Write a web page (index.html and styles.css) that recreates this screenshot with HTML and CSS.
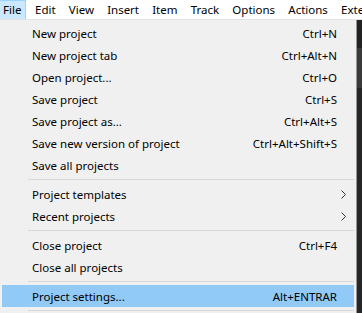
FILE: index.html
```html
<!DOCTYPE html>
<html>
<head>
<meta charset="utf-8">
<link rel="stylesheet" href="styles.css">
</head>
<body>
<div class="screen">
  <div class="menubar">
    <span class="mb-item active">File</span>
    <span class="mb-item">Edit</span>
    <span class="mb-item">View</span>
    <span class="mb-item">Insert</span>
    <span class="mb-item">Item</span>
    <span class="mb-item">Track</span>
    <span class="mb-item">Options</span>
    <span class="mb-item">Actions</span>
    <span class="mb-item">Extensions</span>
  </div>
  <div class="body-row">
    <div class="menu">
      <div class="item"><span class="label">New project</span><span class="key">Ctrl+N</span><span class="arrow"></span></div>
      <div class="item"><span class="label">New project tab</span><span class="key">Ctrl+Alt+N</span><span class="arrow"></span></div>
      <div class="item"><span class="label">Open project...</span><span class="key">Ctrl+O</span><span class="arrow"></span></div>
      <div class="item"><span class="label">Save project</span><span class="key">Ctrl+S</span><span class="arrow"></span></div>
      <div class="item"><span class="label">Save project as...</span><span class="key">Ctrl+Alt+S</span><span class="arrow"></span></div>
      <div class="item"><span class="label">Save new version of project</span><span class="key">Ctrl+Alt+Shift+S</span><span class="arrow"></span></div>
      <div class="item"><span class="label">Save all projects</span><span class="key"></span><span class="arrow"></span></div>
      <div class="sep"></div>
      <div class="item"><span class="label">Project templates</span><span class="key"></span><span class="arrow"><svg width="5" height="9" viewBox="0 0 5 9"><polyline points="0.5,0.5 4.5,4.5 0.5,8.5" fill="none" stroke="#333" stroke-width="1"/></svg></span></div>
      <div class="item"><span class="label">Recent projects</span><span class="key"></span><span class="arrow"><svg width="5" height="9" viewBox="0 0 5 9"><polyline points="0.5,0.5 4.5,4.5 0.5,8.5" fill="none" stroke="#333" stroke-width="1"/></svg></span></div>
      <div class="sep"></div>
      <div class="item"><span class="label">Close project</span><span class="key">Ctrl+F4</span><span class="arrow"></span></div>
      <div class="item"><span class="label">Close all projects</span><span class="key"></span><span class="arrow"></span></div>
      <div class="sep"></div>
      <div class="item hl"><span class="label">Project settings...</span><span class="key">Alt+ENTRAR</span><span class="arrow"></span></div>
      <div class="sep"></div>
    </div>
    <div class="backdrop">
      <div class="bd-a"></div>
      <div class="bd-b"></div>
      <div class="bd-c"></div>
    </div>
  </div>
</div>
</body>
</html>
```
FILE: styles.css
```css
html, body {
  margin: 0;
  padding: 0;
}
body {
  width: 362px;
  height: 313px;
  overflow: hidden;
  background: #262626;
  font-family: "Noto Sans", "Open Sans", sans-serif;
  font-size: 11.5px;
  color: #000;
}
.screen {
  display: flex;
  flex-direction: column;
  width: 362px;
  height: 313px;
  overflow: hidden;
}
.menubar {
  height: 19px;
  background: #fff;
  border-bottom: 1px solid #e3e3e3;
  display: flex;
  align-items: stretch;
  white-space: nowrap;
  overflow: hidden;
  flex: none;
}
.mb-item {
  display: flex;
  align-items: center;
  padding: 0 5.6px 1px;
  border: 1px solid transparent;
  border-bottom: none;
}
.mb-item.active {
  background: #cce8ff;
  border-color: #99d1ff;
  margin-left: -3px;
  padding-left: 5px;
  padding-right: 4px;
  margin-right: 2px;
}
.body-row {
  display: flex;
  flex: 1;
  min-height: 0;
}
.menu {
  flex: none;
  background: #f0f0f0;
  border-right: 1px solid #979797;
  padding: 2px 2px 0 2px;
  box-sizing: border-box;
  width: 357px;
}
.item {
  display: grid;
  grid-template-columns: 1fr auto 17px;
  align-items: center;
  height: 22px;
  padding-left: 30px;
}
.item.hl {
  background: #91c9f7;
}
.key {
  text-align: right;
}
.arrow {
  display: flex;
  align-items: center;
  justify-content: flex-start;
  padding-left: 4px;
}
.sep {
  height: 7px;
  margin-left: 26px;
  display: flex;
  align-items: center;
}
.sep::before {
  content: "";
  flex: 1;
  height: 1px;
  background: #d7d7d7;
}
.backdrop {
  flex: 1;
  display: flex;
  flex-direction: column;
  background: #252525;
}
.bd-a {
  height: 28px;
  background: #222;
}
.bd-b {
  height: 40px;
  background: #3a3a3a;
}
.bd-c {
  flex: 1;
  background: #262626;
}
```
